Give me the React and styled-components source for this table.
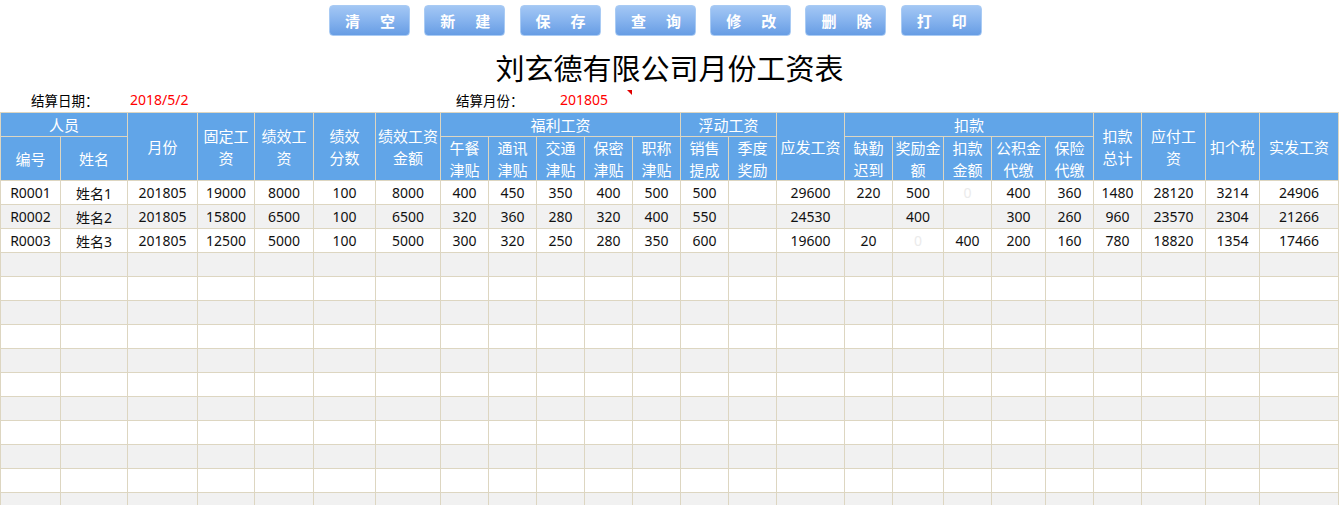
import React from 'react';
import styled, { createGlobalStyle } from 'styled-components';

const GlobalStyle = createGlobalStyle`
  html, body {
    margin: 0;
    padding: 0;
    overflow: hidden;
    background: #fff;
    font-family: "Noto Sans", "Noto Sans CJK SC", sans-serif;
  }
`;

const COLS = [60, 67, 70, 57, 59, 62, 65, 48, 48, 48, 48, 48, 48, 48, 68, 48, 51, 48, 54, 48, 48, 64, 54, 79];
const colTemplate = COLS.map(w => `${w}px`).join(' ');
const LINE = '#ddd6c1';

const Page = styled.div`
  width: 1339px;
`;

const Toolbar = styled.div`
  display: flex;
  gap: 14.3px;
  padding: 5px 0 0 329px;
  height: 31px;
`;

const ToolButton = styled.button`
  width: 81px;
  height: 31px;
  box-sizing: border-box;
  display: flex;
  justify-content: space-between;
  align-items: center;
  padding: 0 14px 0 15px;
  border: 1px solid #a9cbf4;
  border-radius: 4px;
  background: linear-gradient(to bottom, #a3c7f4 0%, #86b3ee 50%, #679de4 100%);
  color: #fff;
  font-family: "Noto Sans CJK SC", sans-serif;
  font-size: 15px;
  font-weight: 700;
  line-height: 1;
  cursor: pointer;
`;

const Title = styled.h1`
  margin: 11px 0 0;
  height: 40px;
  line-height: 40px;
  text-align: center;
  font-family: "Noto Sans CJK SC", sans-serif;
  font-size: 29px;
  font-weight: 400;
  color: #000;
`;

const InfoRow = styled.div`
  display: flex;
  align-items: center;
  height: 25px;
  padding-left: 31px;
  font-size: 13.5px;
`;

const InfoLabel = styled.span`
  width: ${p => p.$w}px;
  color: #000;
  font-family: "Noto Sans CJK SC", sans-serif;
`;

const InfoValue = styled.span`
  position: relative;
  width: ${p => p.$w}px;
  height: 25px;
  line-height: 25px;
  color: #ff0000;
  font-size: 14px;

  ${p => p.$note && `
    &::after {
      content: '';
      position: absolute;
      right: 0;
      top: 3px;
      border-top: 5px solid #e00000;
      border-left: 5px solid transparent;
    }
  `}
`;

const Sheet = styled.div`
  border-left: 1px solid ${LINE};
  border-top: 1px solid ${LINE};
`;

const HeadGrid = styled.div`
  display: grid;
  grid-template-columns: ${colTemplate};
  grid-template-rows: 24px 44px;
`;

const HeadCell = styled.div`
  grid-column: ${p => p.$col};
  grid-row: ${p => p.$row};
  box-sizing: border-box;
  display: flex;
  flex-direction: column;
  align-items: center;
  justify-content: center;
  background: #61a5e8;
  color: #fff;
  font-family: "Noto Sans CJK SC", sans-serif;
  font-size: 15px;
  line-height: 21.5px;
  white-space: nowrap;
  border-right: 1px solid ${LINE};
  border-bottom: 1px solid ${LINE};
`;

const Row = styled.div`
  display: grid;
  grid-template-columns: ${colTemplate};
  height: 24px;
  background: ${p => (p.$alt ? '#f1f1f1' : '#fff')};
`;

const Cell = styled.div`
  box-sizing: border-box;
  display: flex;
  align-items: center;
  justify-content: center;
  font-size: 14px;
  color: ${p => (p.$faint ? '#ebebeb' : '#111')};
  border-right: 1px solid ${LINE};
  border-bottom: 1px solid ${LINE};
  white-space: nowrap;
`;

const buttons = [['清', '空'], ['新', '建'], ['保', '存'], ['查', '询'], ['修', '改'], ['删', '除'], ['打', '印']];

const head = [
  { lines: ['人员'], col: '1 / 3', row: '1' },
  { lines: ['月份'], col: '3', row: '1 / 3' },
  { lines: ['固定工', '资'], col: '4', row: '1 / 3' },
  { lines: ['绩效工', '资'], col: '5', row: '1 / 3' },
  { lines: ['绩效', '分数'], col: '6', row: '1 / 3' },
  { lines: ['绩效工资', '金额'], col: '7', row: '1 / 3' },
  { lines: ['福利工资'], col: '8 / 13', row: '1' },
  { lines: ['浮动工资'], col: '13 / 15', row: '1' },
  { lines: ['应发工资'], col: '15', row: '1 / 3' },
  { lines: ['扣款'], col: '16 / 21', row: '1' },
  { lines: ['扣款', '总计'], col: '21', row: '1 / 3' },
  { lines: ['应付工', '资'], col: '22', row: '1 / 3' },
  { lines: ['扣个税'], col: '23', row: '1 / 3' },
  { lines: ['实发工资'], col: '24', row: '1 / 3' },
  { lines: ['编号'], col: '1', row: '2' },
  { lines: ['姓名'], col: '2', row: '2' },
  { lines: ['午餐', '津贴'], col: '8', row: '2' },
  { lines: ['通讯', '津贴'], col: '9', row: '2' },
  { lines: ['交通', '津贴'], col: '10', row: '2' },
  { lines: ['保密', '津贴'], col: '11', row: '2' },
  { lines: ['职称', '津贴'], col: '12', row: '2' },
  { lines: ['销售', '提成'], col: '13', row: '2' },
  { lines: ['季度', '奖励'], col: '14', row: '2' },
  { lines: ['缺勤', '迟到'], col: '16', row: '2' },
  { lines: ['奖励金', '额'], col: '17', row: '2' },
  { lines: ['扣款', '金额'], col: '18', row: '2' },
  { lines: ['公积金', '代缴'], col: '19', row: '2' },
  { lines: ['保险', '代缴'], col: '20', row: '2' },
];

// '~0' marks a zero shown in near-white
const data = [
  ['R0001', '姓名1', '201805', '19000', '8000', '100', '8000', '400', '450', '350', '400', '500', '500', '', '29600', '220', '500', '~0', '400', '360', '1480', '28120', '3214', '24906'],
  ['R0002', '姓名2', '201805', '15800', '6500', '100', '6500', '320', '360', '280', '320', '400', '550', '', '24530', '', '400', '', '300', '260', '960', '23570', '2304', '21266'],
  ['R0003', '姓名3', '201805', '12500', '5000', '100', '5000', '300', '320', '250', '280', '350', '600', '', '19600', '20', '~0', '400', '200', '160', '780', '18820', '1354', '17466'],
];

const TOTAL_ROWS = 14;

export default function App() {
  const rows = Array.from({ length: TOTAL_ROWS }, (_, i) => data[i] || COLS.map(() => ''));

  return (
    <Page>
      <GlobalStyle />
      <Toolbar>
        {buttons.map(([a, b]) => (
          <ToolButton key={a + b}>
            <span>{a}</span>
            <span>{b}</span>
          </ToolButton>
        ))}
      </Toolbar>

      <Title>刘玄德有限公司月份工资表</Title>

      <InfoRow>
        <InfoLabel $w={99}>结算日期：</InfoLabel>
        <InfoValue $w={326}>2018/5/2</InfoValue>
        <InfoLabel $w={104}>结算月份：</InfoLabel>
        <InfoValue $w={72} $note>201805</InfoValue>
      </InfoRow>

      <Sheet>
        <HeadGrid>
          {head.map(h => (
            <HeadCell key={h.col + h.row} $col={h.col} $row={h.row}>
              {h.lines.map(l => <span key={l}>{l}</span>)}
            </HeadCell>
          ))}
        </HeadGrid>
        {rows.map((r, i) => (
          <Row key={i} $alt={i % 2 === 1}>
            {r.map((v, j) => (
              <Cell key={j} $faint={v === '~0'}>
                {v === '~0' ? '0' : v}
              </Cell>
            ))}
          </Row>
        ))}
      </Sheet>
    </Page>
  );
}
